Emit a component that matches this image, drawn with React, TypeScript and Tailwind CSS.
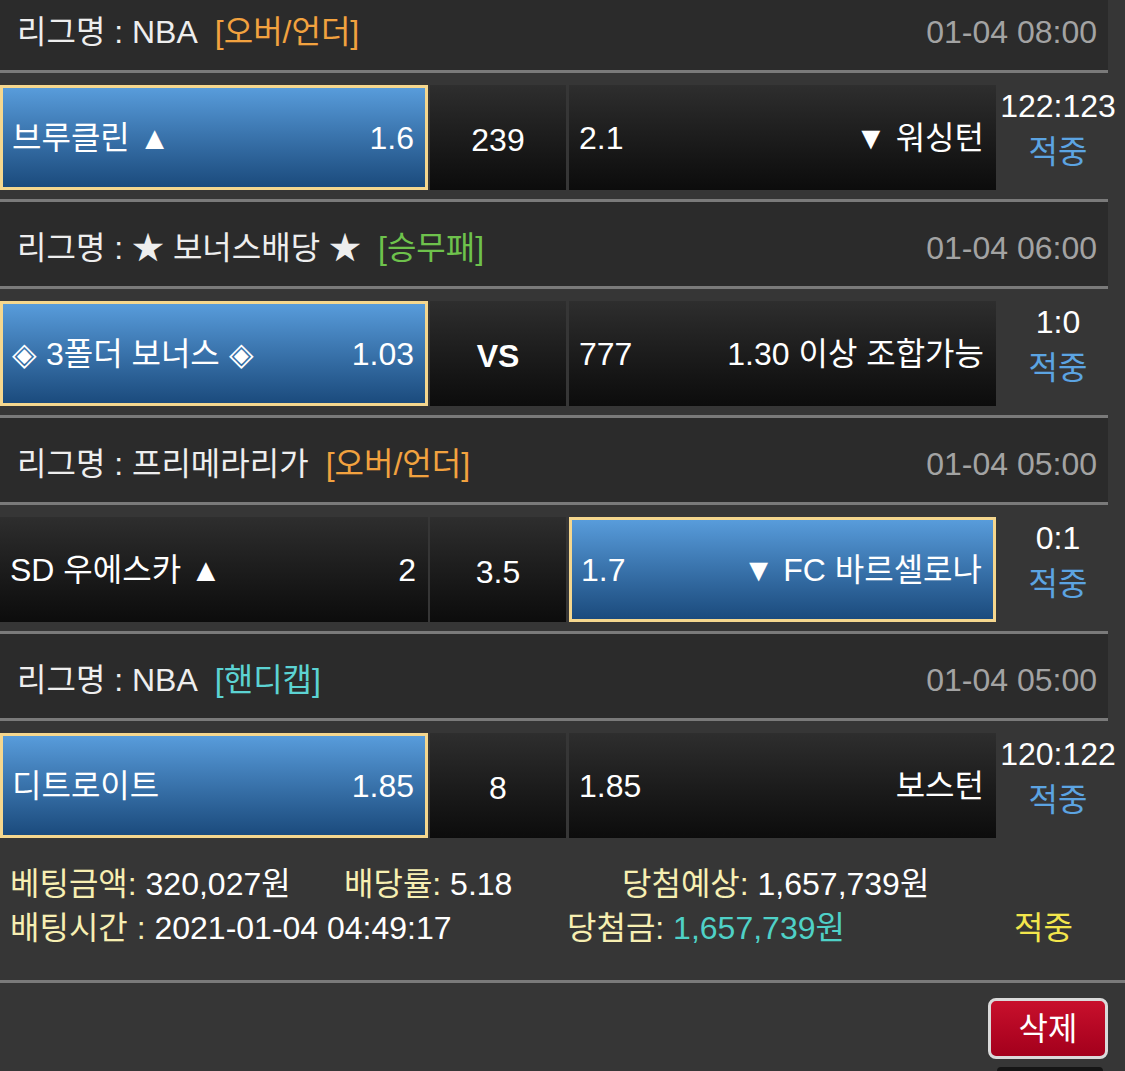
import React from 'react';

type Side = { left: string; right: string };
type Match = {
  league: string;
  tag: string;
  tagColor: string;
  time: string;
  home: Side;
  mid: string;
  midBold?: boolean;
  away: Side;
  pick: 'home' | 'away';
  score: string;
};

const matches: Match[] = [
  {
    league: '리그명 : NBA',
    tag: '[오버/언더]',
    tagColor: 'text-[#f2a23f]',
    time: '01-04 08:00',
    home: { left: '브루클린 ▲', right: '1.6' },
    mid: '239',
    away: { left: '2.1', right: '▼ 워싱턴' },
    pick: 'home',
    score: '122:123',
  },
  {
    league: '리그명 : ★ 보너스배당 ★',
    tag: '[승무패]',
    tagColor: 'text-[#6ec24c]',
    time: '01-04 06:00',
    home: { left: '◈ 3폴더 보너스 ◈', right: '1.03' },
    mid: 'VS',
    midBold: true,
    away: { left: '777', right: '1.30 이상 조합가능' },
    pick: 'home',
    score: '1:0',
  },
  {
    league: '리그명 : 프리메라리가',
    tag: '[오버/언더]',
    tagColor: 'text-[#f2a23f]',
    time: '01-04 05:00',
    home: { left: 'SD 우에스카 ▲', right: '2' },
    mid: '3.5',
    away: { left: '1.7', right: '▼ FC 바르셀로나' },
    pick: 'away',
    score: '0:1',
  },
  {
    league: '리그명 : NBA',
    tag: '[핸디캡]',
    tagColor: 'text-[#5cd3d3]',
    time: '01-04 05:00',
    home: { left: '디트로이트', right: '1.85' },
    mid: '8',
    away: { left: '1.85', right: '보스턴' },
    pick: 'home',
    score: '120:122',
  },
];

const BetCell = ({ side, selected, width }: { side: Side; selected: boolean; width: string }) => (
  <div
    className={`${width} h-[105px] flex items-center justify-between ${
      selected
        ? 'border-[3px] border-[#f5d78e] bg-linear-to-b from-[#589cdb] to-[#1b4b7d] pl-[9px] pr-[11px]'
        : 'bg-linear-to-b from-[#2e2e2e] to-[#0c0c0c] pl-[10px] pr-[12px]'
    }`}
  >
    <span>{side.left}</span>
    <span>{side.right}</span>
  </div>
);

const Divider = () => <div className="w-[1108px] h-[3px] bg-[#7a7a7a]" />;

export default function App() {
  return (
    <div className="min-h-screen bg-[#363636] text-white text-[32px] leading-[36px] font-['Liberation_Sans','Noto_Sans_CJK_KR',sans-serif] overflow-hidden">
      <div className="-mt-[14px]">
        {matches.map((m, i) => (
          <div key={i}>
            {/* league header */}
            <div className="w-[1108px] h-[84px] bg-[#2b2b2b] flex items-center justify-between pt-[8px] pl-[17px] pr-[11px]">
              <div className="text-[#eeeeee]">
                {m.league}
                <span className={`ml-[17px] ${m.tagColor}`}>{m.tag}</span>
              </div>
              <div className="text-[#a3a3a3]">{m.time}</div>
            </div>
            <Divider />

            {/* bet row */}
            <div className="flex pt-[12px] pb-[9px]">
              <BetCell side={m.home} selected={m.pick === 'home'} width="w-[428px]" />
              <div
                className={`w-[136px] h-[105px] ml-[2px] flex items-center justify-center pt-[4px] bg-linear-to-b from-[#2e2e2e] to-[#0c0c0c] ${
                  m.midBold ? 'font-bold' : ''
                }`}
              >
                {m.mid}
              </div>
              <div className="ml-[3px]">
                <BetCell side={m.away} selected={m.pick === 'away'} width="w-[427px]" />
              </div>
              <div className="w-[124px] flex flex-col items-center pt-[3px]">
                <div>{m.score}</div>
                <div className="mt-[10px] text-[#5ca4e2]">적중</div>
              </div>
            </div>
            {i < matches.length - 1 && <Divider />}
          </div>
        ))}

        {/* summary */}
        <div className="pl-[10px] pt-[15px] pb-[30px]">
          <div className="flex h-[44px] items-center">
            <div className="w-[334px]">
              <span className="text-[#f7efb2]">베팅금액:</span> 320,027원
            </div>
            <div className="w-[278px]">
              <span className="text-[#f7efb2]">배당률:</span> 5.18
            </div>
            <div>
              <span className="text-[#f7efb2]">당첨예상:</span> 1,657,739원
            </div>
          </div>
          <div className="flex h-[44px] items-center">
            <div className="w-[557px]">
              <span className="text-[#f7efb2]">배팅시간 :</span> 2021-01-04 04:49:17
            </div>
            <div className="w-[447px]">
              <span className="text-[#f7efb2]">당첨금:</span>{' '}
              <span className="text-[#4fd1c7]">1,657,739원</span>
            </div>
            <div className="text-[#f3e64c]">적중</div>
          </div>
        </div>
        <div className="w-full h-[3px] bg-[#7a7a7a]" />

        <div className="flex flex-col items-end pr-[17px] pt-[15px]">
          <button className="w-[120px] h-[61px] rounded-lg border-[3px] border-[#dadada] bg-linear-to-b from-[#c8102c] to-[#a3001c] text-white text-[32px]">
            삭제
          </button>
          <div className="w-[106px] h-[8px] mt-[8px] mr-[5px] bg-[#151515] rounded-t-sm" />
        </div>
      </div>
    </div>
  );
}
